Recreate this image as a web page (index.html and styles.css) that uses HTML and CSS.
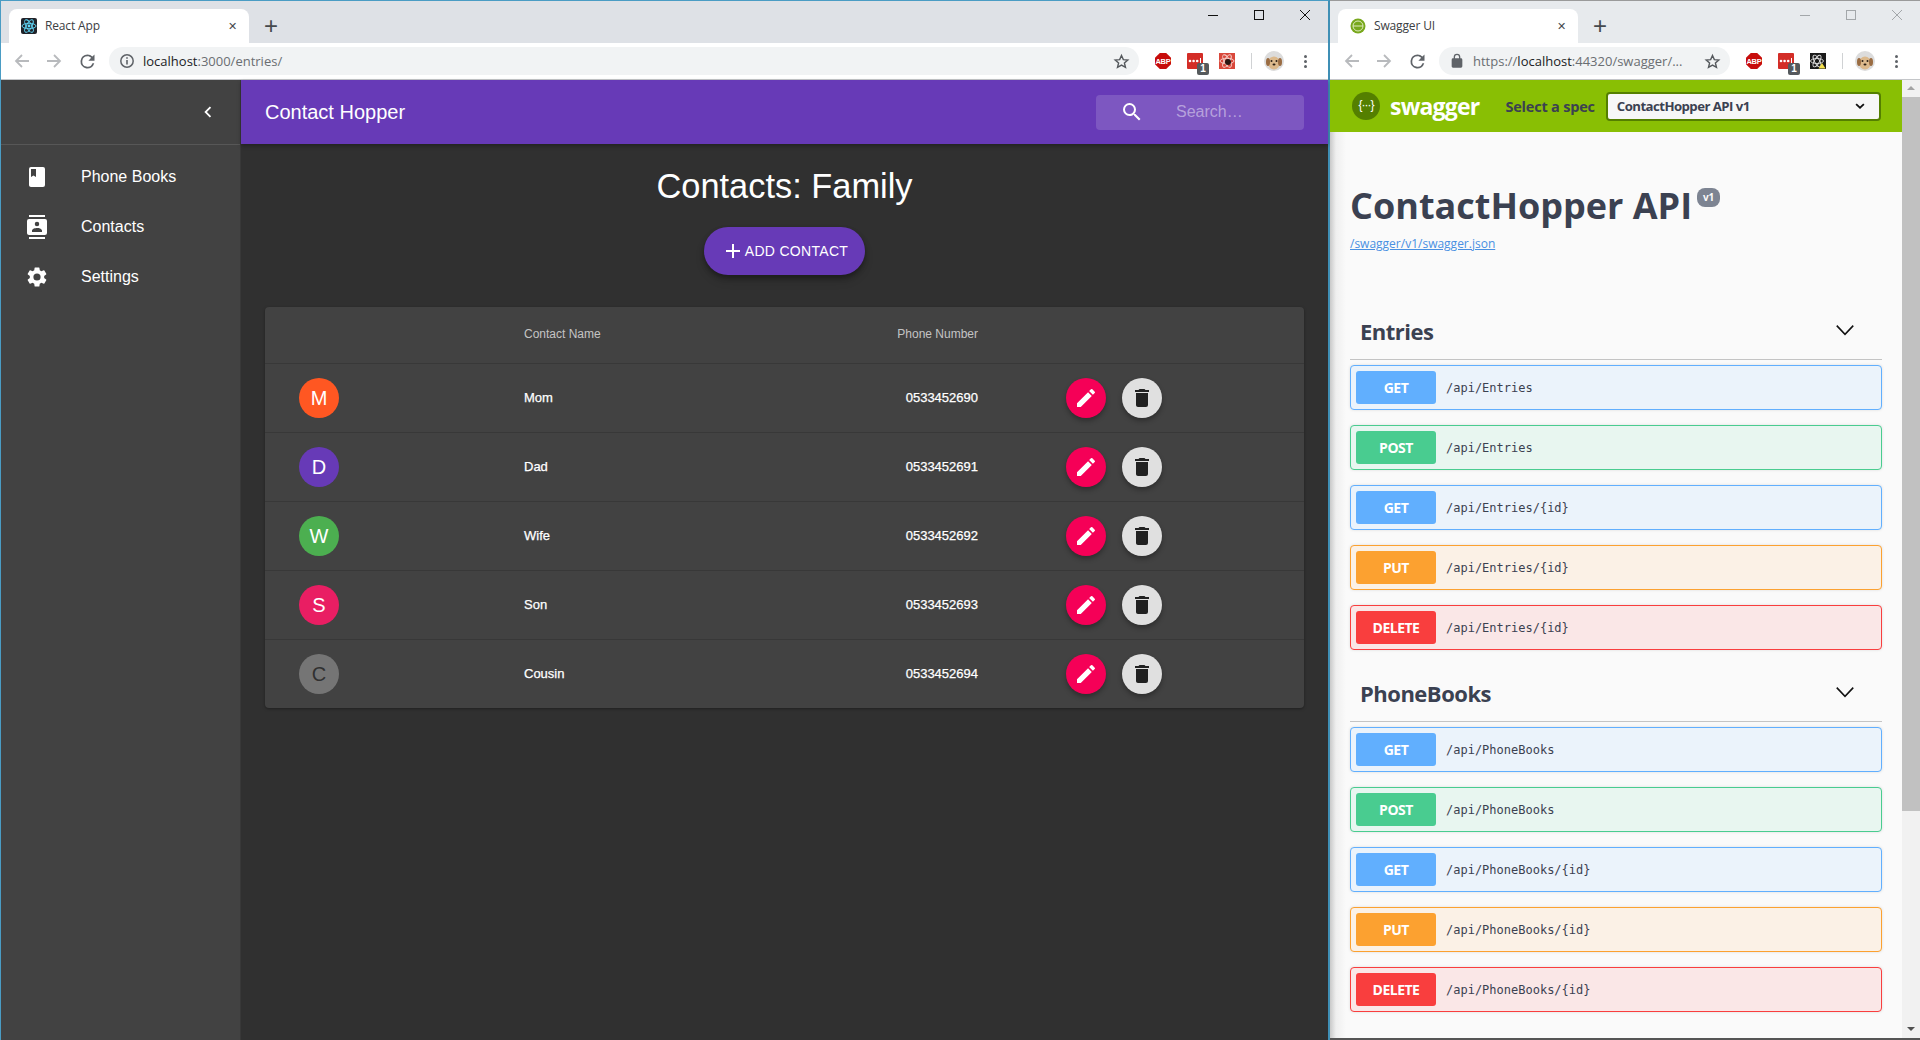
FILE: index.html
```html
<!DOCTYPE html>
<html lang="en">
<head>
  <meta charset="UTF-8" />
  <title>Contact Hopper</title>
  <link rel="stylesheet" href="styles.css">
</head>
<body>
  <svg class="defs" width="0" height="0">
    <defs>
      <symbol id="i-back" viewBox="0 0 16 16"><path d="M15 8H2.5M8 2L2 8l6 6" fill="none" stroke="currentColor" stroke-width="1.8"/></symbol>
      <symbol id="i-forward" viewBox="0 0 16 16"><path d="M1 8h12.5M8 2l6 6-6 6" fill="none" stroke="currentColor" stroke-width="1.8"/></symbol>
      <symbol id="i-reload" viewBox="0 0 24 24"><path d="M17.65 6.35A7.96 7.96 0 0 0 12 4a8 8 0 1 0 7.73 10h-2.08A6 6 0 1 1 12 6c1.66 0 3.14.69 4.22 1.78L13 11h7V4l-2.35 2.35z" fill="currentColor"/></symbol>
      <symbol id="i-star" viewBox="0 0 24 24"><path d="M12 3.5l2.6 5.8 6.3.6-4.8 4.2 1.5 6.2L12 17l-5.6 3.3 1.5-6.2-4.8-4.2 6.3-.6z" fill="none" stroke="currentColor" stroke-width="2"/></symbol>
      <symbol id="i-abp" viewBox="0 0 20 20"><path d="M6 0h8l6 6v8l-6 6H6l-6-6V6z" fill="#c70d0c"/></symbol>
      <symbol id="i-lastpass" viewBox="0 0 16 16"><rect width="16" height="16" rx="1" fill="#d32d27"/><circle cx="3" cy="8" r="1.3" fill="#fff"/><circle cx="6.6" cy="8" r="1.3" fill="#fff"/><circle cx="10.2" cy="8" r="1.3" fill="#fff"/><rect x="13" y="5" width="1" height="6" fill="#fff"/></symbol>
      <symbol id="i-avatar" viewBox="0 0 20 20">
        <circle cx="10" cy="10" r="10" fill="#dcdcdc"/>
        <ellipse cx="10" cy="12" rx="6" ry="6.5" fill="#dcb98c"/>
        <ellipse cx="4" cy="11" rx="2" ry="4" fill="#9a6c42"/>
        <ellipse cx="16" cy="11" rx="2" ry="4" fill="#9a6c42"/>
        <circle cx="7.5" cy="10" r="1" fill="#2b2016"/>
        <circle cx="12.5" cy="10" r="1" fill="#2b2016"/>
        <ellipse cx="10" cy="13.5" rx="1.5" ry="1" fill="#2b2016"/>
      </symbol>
      <symbol id="i-edit" viewBox="0 0 24 24"><path d="M3 17.25V21h3.75L17.81 9.94l-3.75-3.75L3 17.25zM20.71 7.04a1 1 0 0 0 0-1.41l-2.34-2.34a1 1 0 0 0-1.41 0l-1.83 1.83 3.75 3.75 1.83-1.83z" fill="currentColor"/></symbol>
      <symbol id="i-trash" viewBox="0 0 24 24"><path d="M6 19c0 1.1.9 2 2 2h8a2 2 0 0 0 2-2V7H6v12zM19 4h-3.5l-1-1h-5l-1 1H5v2h14V4z" fill="currentColor"/></symbol>
      <symbol id="i-down" viewBox="0 0 20 20"><path d="M2.5 6l7.5 8 7.5-8" fill="none" stroke="currentColor" stroke-width="1.4"/></symbol>
    </defs>
  </svg>

  <div class="desktop">
    <section class="window window-left">
      <div class="tabstrip">
        <div class="tab">
          <svg class="favicon" viewBox="0 0 16 16">
            <rect width="16" height="16" rx="2" fill="#20232a"/>
            <g fill="none" stroke="#61dafb" stroke-width=".9">
              <ellipse cx="8" cy="8" rx="7" ry="2.7"/>
              <ellipse cx="8" cy="8" rx="7" ry="2.7" transform="rotate(60 8 8)"/>
              <ellipse cx="8" cy="8" rx="7" ry="2.7" transform="rotate(120 8 8)"/>
            </g>
            <circle cx="8" cy="8" r="1.4" fill="#61dafb"/>
          </svg>
          <span class="tab-title">React App</span>
          <span class="tab-close">✕</span>
        </div>
        <span class="new-tab">+</span>
        <div class="win-controls">
          <span class="win-min"></span>
          <span class="win-max"></span>
          <svg class="win-close" viewBox="0 0 10 10"><path d="M0 0l10 10M10 0L0 10" stroke="currentColor" stroke-width="1"/></svg>
        </div>
      </div>
      <div class="toolbar">
        <svg class="nav-icon nav-off"><use href="#i-back"/></svg>
        <svg class="nav-icon nav-off"><use href="#i-forward"/></svg>
        <svg class="nav-icon nav-on"><use href="#i-reload"/></svg>
        <div class="omnibox">
          <svg class="omni-info" viewBox="0 0 16 16"><circle cx="8" cy="8" r="6.2" fill="none" stroke="#5f6368" stroke-width="1.5"/><path d="M8 7v4.5M8 4.3v1.5" stroke="#5f6368" stroke-width="1.6"/></svg>
          <span class="url"><b>localhost</b>:3000/entries/</span>
          <svg class="omni-star"><use href="#i-star"/></svg>
        </div>
        <div class="extensions">
          <span class="ext-abp"><svg><use href="#i-abp"/></svg><i>ABP</i></span>
          <span class="ext-lastpass"><svg><use href="#i-lastpass"/></svg><em>1</em></span>
          <span class="ext-react ext-react-red">
            <svg viewBox="0 0 16 16"><g fill="none" stroke="#f6d5d0" stroke-width=".9"><ellipse cx="8" cy="8" rx="7" ry="2.7"/><ellipse cx="8" cy="8" rx="7" ry="2.7" transform="rotate(60 8 8)"/><ellipse cx="8" cy="8" rx="7" ry="2.7" transform="rotate(120 8 8)"/></g><circle cx="9" cy="9" r="3" fill="#2a1512"/></svg>
          </span>
          <span class="ext-divider"></span>
          <svg class="ext-avatar"><use href="#i-avatar"/></svg>
          <span class="ext-menu"><i></i><i></i><i></i></span>
        </div>
      </div>

      <div class="app">
        <aside class="drawer">
          <div class="drawer-head">
            <svg class="drawer-chevron" viewBox="0 0 24 24"><path d="M15.41 7.41L14 6l-6 6 6 6 1.41-1.41L10.83 12z" fill="currentColor"/></svg>
          </div>
          <nav class="drawer-nav">
            <a class="drawer-item">
              <svg viewBox="0 0 24 24"><path d="M18 2H6a2 2 0 0 0-2 2v16c0 1.1.9 2 2 2h12a2 2 0 0 0 2-2V4a2 2 0 0 0-2-2zM6 4h5v8l-2.5-1.5L6 12V4z" fill="currentColor"/></svg>
              <span>Phone Books</span>
            </a>
            <a class="drawer-item">
              <svg viewBox="0 0 24 24"><path d="M20 0H4v2h16V0zM4 24h16v-2H4v2zM20 4H4a2 2 0 0 0-2 2v12c0 1.1.9 2 2 2h16a2 2 0 0 0 2-2V6a2 2 0 0 0-2-2zm-8 2.75A2.25 2.25 0 1 1 12 11.25a2.25 2.25 0 0 1 0-4.5zM17 17H7v-1.5c0-1.67 3.33-2.5 5-2.5s5 .83 5 2.5V17z" fill="currentColor"/></svg>
              <span>Contacts</span>
            </a>
            <a class="drawer-item">
              <svg viewBox="0 0 24 24"><path d="M19.14 12.94c.04-.3.06-.61.06-.94s-.02-.64-.07-.94l2.03-1.58a.5.5 0 0 0 .12-.61l-1.92-3.32a.5.5 0 0 0-.59-.22l-2.39.96a7 7 0 0 0-1.62-.94l-.36-2.54a.48.48 0 0 0-.48-.41h-3.84a.48.48 0 0 0-.47.41l-.36 2.54c-.59.24-1.13.57-1.62.94l-2.39-.96a.49.49 0 0 0-.59.22L2.74 8.87a.48.48 0 0 0 .12.61l2.03 1.58c-.05.3-.09.63-.09.94s.02.64.07.94l-2.03 1.58a.5.5 0 0 0-.12.61l1.92 3.32c.12.22.37.29.59.22l2.39-.96c.5.38 1.03.7 1.62.94l.36 2.54c.05.24.24.41.48.41h3.84c.24 0 .44-.17.47-.41l.36-2.54c.59-.24 1.13-.56 1.62-.94l2.39.96c.22.08.47 0 .59-.22l1.92-3.32a.48.48 0 0 0-.12-.61l-2.01-1.58zM12 15.6a3.6 3.6 0 1 1 0-7.2 3.6 3.6 0 0 1 0 7.2z" fill="currentColor"/></svg>
              <span>Settings</span>
            </a>
          </nav>
        </aside>

        <div class="main">
          <header class="appbar">
            <h6 class="appbar-title">Contact Hopper</h6>
            <div class="search">
              <svg viewBox="0 0 24 24"><path d="M15.5 14h-.79l-.28-.27A6.47 6.47 0 0 0 16 9.5 6.5 6.5 0 1 0 9.5 16c1.61 0 3.09-.59 4.23-1.57l.27.28v.79l5 4.99L20.49 19l-4.99-5zm-6 0a4.5 4.5 0 1 1 0-9 4.5 4.5 0 0 1 0 9z" fill="currentColor"/></svg>
              <span>Search…</span>
            </div>
          </header>

          <div class="content">
            <h1 class="page-title">Contacts: Family</h1>
            <button class="add-btn">
              <svg viewBox="0 0 24 24"><path d="M19 13h-6v6h-2v-6H5v-2h6V5h2v6h6v2z" fill="currentColor"/></svg>
              Add Contact
            </button>

            <table class="contacts">
              <thead>
                <tr>
                  <th class="col-avatar"></th>
                  <th class="col-name">Contact Name</th>
                  <th class="col-phone">Phone Number</th>
                  <th class="col-actions"></th>
                </tr>
              </thead>
              <tbody id="contactRows"></tbody>
            </table>
          </div>
        </div>
      </div>
    </section>

    <section class="window window-right">
      <div class="tabstrip">
        <div class="tab">
          <svg class="favicon" viewBox="0 0 16 16">
            <circle cx="8" cy="8" r="7.5" fill="#78a81d"/>
            <circle cx="8" cy="8" r="5" fill="none" stroke="#dfeac0" stroke-width="1"/>
            <path d="M3 8h10" stroke="#dfeac0" stroke-width="1"/>
          </svg>
          <span class="tab-title">Swagger UI</span>
          <span class="tab-close">✕</span>
        </div>
        <span class="new-tab">+</span>
        <div class="win-controls">
          <span class="win-min"></span>
          <span class="win-max"></span>
          <svg class="win-close" viewBox="0 0 10 10"><path d="M0 0l10 10M10 0L0 10" stroke="currentColor" stroke-width="1"/></svg>
        </div>
      </div>
      <div class="toolbar">
        <svg class="nav-icon nav-off"><use href="#i-back"/></svg>
        <svg class="nav-icon nav-off"><use href="#i-forward"/></svg>
        <svg class="nav-icon nav-on"><use href="#i-reload"/></svg>
        <div class="omnibox">
          <svg class="omni-info" viewBox="0 0 24 24"><path d="M18 8h-1V6a5 5 0 0 0-10 0v2H6a2 2 0 0 0-2 2v10c0 1.1.9 2 2 2h12a2 2 0 0 0 2-2V10a2 2 0 0 0-2-2zM9 6a3 3 0 0 1 6 0v2H9V6z" fill="#5f6368"/></svg>
          <span class="url">https://<b>localhost</b>:44320/swagger/...</span>
          <svg class="omni-star"><use href="#i-star"/></svg>
        </div>
        <div class="extensions">
          <span class="ext-abp"><svg><use href="#i-abp"/></svg><i>ABP</i></span>
          <span class="ext-lastpass"><svg><use href="#i-lastpass"/></svg><em>1</em></span>
          <span class="ext-react ext-react-dark">
            <svg viewBox="0 0 16 16"><g fill="none" stroke="#e0e0e0" stroke-width=".9"><ellipse cx="7" cy="8" rx="6.5" ry="2.5"/><ellipse cx="7" cy="8" rx="6.5" ry="2.5" transform="rotate(60 7 8)"/><ellipse cx="7" cy="8" rx="6.5" ry="2.5" transform="rotate(120 7 8)"/></g><path d="M12 10l3.5 5.5h-7z" fill="#f4e04d"/></svg>
          </span>
          <span class="ext-divider"></span>
          <svg class="ext-avatar"><use href="#i-avatar"/></svg>
          <span class="ext-menu"><i></i><i></i><i></i></span>
        </div>
      </div>

      <div class="swagger">
        <div class="swagger-page">
          <div class="topbar">
            <span class="logo-mark">{···}</span>
            <span class="logo-word">swagger</span>
            <span class="spec-label">Select a spec</span>
            <div class="spec-select">
              <span>ContactHopper API v1</span>
              <svg viewBox="0 0 20 20"><path d="M13.25 8.5L10 11.6 6.75 8.5 5.5 9.7l4.5 4.3 4.5-4.3z" fill="#111" transform="translate(0 -1)"/></svg>
            </div>
          </div>
          <div class="info">
            <h2 class="api-title">ContactHopper API<span class="version">v1</span></h2>
            <a class="spec-link">/swagger/v1/swagger.json</a>
          </div>
          <div id="opGroups"></div>
        </div>
        <div class="scrollbar">
          <span class="scroll-up"></span>
          <span class="scroll-thumb"></span>
          <span class="scroll-down"></span>
        </div>
      </div>
    </section>
  </div>

  <script>
    const contacts = [
      { name: "Mom", phone: "0533452690", color: "#ff5722", text: "#fff" },
      { name: "Dad", phone: "0533452691", color: "#673ab7", text: "#fff" },
      { name: "Wife", phone: "0533452692", color: "#4caf50", text: "#fff" },
      { name: "Son", phone: "0533452693", color: "#e91e63", text: "#fff" },
      { name: "Cousin", phone: "0533452694", color: "#757575", text: "#303030" }
    ];

    document.getElementById("contactRows").innerHTML = contacts.map((c) => `
      <tr>
        <td class="col-avatar"><span class="avatar" style="background-color: ${c.color}; color: ${c.text}">${c.name[0]}</span></td>
        <td class="col-name">${c.name}</td>
        <td class="col-phone">${c.phone}</td>
        <td class="col-actions">
          <div class="actions">
            <button class="fab fab-edit"><svg><use href="#i-edit"/></svg></button>
            <button class="fab fab-delete"><svg><use href="#i-trash"/></svg></button>
          </div>
        </td>
      </tr>`).join("");

    const groups = [
      { name: "Entries", path: "/api/Entries" },
      { name: "PhoneBooks", path: "/api/PhoneBooks" }
    ];

    document.getElementById("opGroups").innerHTML = groups.map((g) => `
      <div class="op-group">
        <div class="op-head"><h3>${g.name}</h3><svg><use href="#i-down"/></svg></div>
        ${[["get", ""], ["post", ""], ["get", "/{id}"], ["put", "/{id}"], ["delete", "/{id}"]].map(([m, suffix]) => `
          <div class="op op-${m}"><span class="op-method">${m.toUpperCase()}</span><span class="op-path">${g.path}${suffix}</span></div>`).join("")}
      </div>`).join("");
  </script>
</body>
</html>
```

FILE: styles.css
```css
* {
  box-sizing: border-box;
}

body {
  margin: 0;
  height: 1040px;
  overflow: hidden;
  font-family: "Liberation Sans", Arial, sans-serif;
}

.defs {
  position: absolute;
}

.desktop {
  display: flex;
  height: 1040px;
}

/* Chrome windows */
.window {
  display: flex;
  flex-direction: column;
  height: 1040px;
}
.window-left {
  width: 1330px;
  border: 1px solid #4a9cc4;
  border-bottom: none;
  border-right-width: 2px;
  border-right-color: #3f8fb5;
}
.window-right {
  width: 590px;
  border-top: 1px solid #9a9a9a;
  border-bottom: 2px solid #555;
}

.tabstrip {
  display: flex;
  align-items: flex-end;
  height: 42px;
  background-color: #dee1e6;
  position: relative;
}
.window-right .tabstrip {
  background-color: #e7eaed;
}

.tab {
  display: flex;
  align-items: center;
  width: 240px;
  height: 34px;
  margin-left: 8px;
  padding: 0 12px 0 12px;
  background-color: #fff;
  border-radius: 8px 8px 0 0;
}
.favicon {
  width: 16px;
  height: 16px;
  flex: none;
}
.tab-title {
  flex: 1;
  margin-left: 8px;
  margin-top: -1px;
  font-family: "Open Sans", sans-serif;
  font-size: 12px;
  letter-spacing: -0.15px;
  color: #3c4043;
}
.tab-close {
  font-size: 11px;
  color: #45494d;
}
.new-tab {
  width: 28px;
  height: 34px;
  margin-left: 8px;
  text-align: center;
  font-family: "Liberation Sans", sans-serif;
  font-size: 24px;
  line-height: 33px;
  color: #45494d;
}

.win-controls {
  display: flex;
  align-items: center;
  gap: 36px;
  position: absolute;
  top: 9px;
  right: 18px;
  color: #111;
}
.win-min {
  width: 10px;
  height: 1px;
  background-color: currentColor;
}
.win-max {
  width: 10px;
  height: 10px;
  border: 1px solid currentColor;
}
.win-close {
  width: 10px;
  height: 10px;
}
.window-right .win-controls {
  color: #a3a7aa;
}

.toolbar {
  display: flex;
  align-items: center;
  height: 37px;
  padding-left: 13px;
  background-color: #fff;
  border-bottom: 1px solid #c4c6c9;
}
.window-right .toolbar {
  padding-left: 14px;
}
.nav-icon {
  flex: none;
  width: 16px;
  height: 16px;
  margin-right: 16px;
}
.nav-off {
  color: #b8babd;
}
.nav-icon.nav-on {
  width: 21px;
  height: 21px;
  color: #5f6368;
  margin-right: 11px;
  margin-left: -1px;
}
.omnibox {
  display: flex;
  align-items: center;
  flex: 1;
  height: 28px;
  padding: 0 9px 0 10px;
  background-color: #f1f3f4;
  border-radius: 14px;
}
.omni-info {
  flex: none;
  width: 16px;
  height: 16px;
}
.url {
  flex: 1;
  margin-left: 8px;
  font-family: "Open Sans", sans-serif;
  font-size: 13px;
  color: #6a6e72;
  white-space: nowrap;
  overflow: hidden;
}
.url b {
  font-weight: 400;
  color: #202124;
}
.omni-star {
  flex: none;
  width: 17px;
  height: 17px;
  color: #55595d;
}

.extensions {
  display: flex;
  align-items: center;
  flex: none;
}
.extensions > * {
  flex: none;
}
.ext-abp {
  position: relative;
  width: 16px;
  height: 16px;
  margin-left: 16px;
}
.ext-abp svg {
  width: 16px;
  height: 16px;
}
.ext-abp i {
  position: absolute;
  left: 0;
  top: 4px;
  width: 16px;
  text-align: center;
  font: normal bold 7.5px "Liberation Sans", sans-serif;
  letter-spacing: -0.2px;
  color: #fff;
}
.ext-lastpass {
  position: relative;
  width: 16px;
  height: 16px;
  margin-left: 16px;
}
.ext-lastpass svg {
  display: block;
  width: 16px;
  height: 16px;
}
.ext-lastpass em {
  position: absolute;
  left: 10px;
  top: 10px;
  width: 12px;
  height: 12px;
  border-radius: 2px;
  background-color: #55595c;
  text-align: center;
  font: normal bold 10px/12px "Liberation Sans", sans-serif;
  color: #fff;
}
.ext-react {
  width: 16px;
  height: 16px;
  margin-left: 16px;
}
.ext-react svg {
  display: block;
  width: 16px;
  height: 16px;
}
.ext-react-red {
  background-color: #d9483b;
}
.ext-react-dark {
  background-color: #1b1b1b;
}
.ext-divider {
  width: 1px;
  height: 16px;
  margin-left: 16px;
  background-color: #d0d2d4;
}
.ext-avatar {
  width: 20px;
  height: 20px;
  margin-left: 12px;
}
.ext-menu {
  display: flex;
  flex-direction: column;
  gap: 2px;
  width: 4px;
  margin: 0 21px 0 20px;
}
.ext-menu i {
  width: 3px;
  height: 3px;
  border-radius: 50%;
  background-color: #5f6368;
}
.window-left .ext-menu {
  margin-right: 20px;
}

/* Contact Hopper app */
.app {
  display: flex;
  flex: 1;
  min-height: 0;
}

.drawer {
  width: 240px;
  flex: none;
  background-color: #424242;
  border-right: 1px solid #383838;
  color: #fff;
}
.drawer-head {
  display: flex;
  align-items: center;
  justify-content: flex-end;
  height: 65px;
  padding-right: 21px;
  border-bottom: 1px solid #575757;
}
.drawer-chevron {
  width: 22px;
  height: 22px;
}
.drawer-nav {
  padding-top: 7px;
}
.drawer-item {
  display: flex;
  align-items: center;
  height: 50px;
  padding-left: 24px;
  font-size: 16px;
}
.drawer-item svg {
  flex: none;
  width: 24px;
  height: 24px;
  margin-right: 32px;
}

.main {
  flex: 1;
  display: flex;
  flex-direction: column;
  min-width: 0;
  background-color: #303030;
}
.appbar {
  display: flex;
  align-items: center;
  justify-content: space-between;
  flex: none;
  height: 64px;
  padding: 0 24px;
  background-color: #673ab7;
  color: #fff;
  box-shadow: 0 2px 4px rgba(0, 0, 0, 0.3);
}
.appbar-title {
  margin: 0;
  font-size: 20px;
  font-weight: 400;
}
.search {
  display: flex;
  align-items: center;
  width: 208px;
  height: 35px;
  padding-left: 24px;
  border-radius: 4px;
  background-color: rgba(255, 255, 255, 0.15);
  font-size: 16px;
}
.search svg {
  flex: none;
  width: 24px;
  height: 24px;
}
.search span {
  margin-left: 32px;
  color: rgba(255, 255, 255, 0.45);
}

.content {
  display: flex;
  flex-direction: column;
  align-items: center;
  padding: 22px 24px 0;
}
.page-title {
  margin: 0;
  height: 39px;
  font-size: 34.4px;
  font-weight: 400;
  line-height: 40px;
  color: #fff;
}
.add-btn {
  display: flex;
  align-items: center;
  justify-content: center;
  width: 161px;
  height: 48px;
  margin-top: 22px;
  padding: 0;
  border: none;
  border-radius: 24px;
  background-color: #673ab7;
  color: #fff;
  font-family: "Liberation Sans", sans-serif;
  font-size: 14px;
  letter-spacing: 0.3px;
  text-transform: uppercase;
  box-shadow: 0 3px 5px rgba(0, 0, 0, 0.3), 0 6px 10px rgba(0, 0, 0, 0.14);
}
.add-btn svg {
  flex: none;
  width: 24px;
  height: 24px;
}

.contacts {
  width: 1039px;
  margin-top: 32px;
  border-collapse: separate;
  border-spacing: 0;
  table-layout: fixed;
  background-color: #424242;
  border-radius: 4px;
  box-shadow: 0 1px 3px rgba(0, 0, 0, 0.35);
}
.contacts th {
  height: 57px;
  padding: 0;
  font-size: 12px;
  font-weight: 400;
  color: rgba(255, 255, 255, 0.7);
  border-bottom: 1px solid #383838;
}
.contacts td {
  height: 69px;
  padding: 0;
  font-size: 13px;
  font-weight: 400;
  -webkit-text-stroke: 0.25px #fff;
  color: #fff;
  border-bottom: 1px solid #383838;
}
.contacts tr:last-child td {
  height: 68px;
  border-bottom: none;
}
.col-avatar {
  width: 259px;
}
.contacts .col-name {
  width: 300px;
  padding-bottom: 2px;
  text-align: left;
}
.contacts .col-phone {
  width: 154px;
  padding-bottom: 2px;
  text-align: right;
}
.contacts .col-actions {
  padding-left: 88px;
}
.avatar {
  display: block;
  width: 40px;
  height: 40px;
  margin-left: 34px;
  border-radius: 50%;
  text-align: center;
  font-size: 20px;
  font-weight: 400;
  line-height: 40px;
  -webkit-text-stroke: 0;
}
.actions {
  display: flex;
  gap: 16px;
}
.fab {
  display: flex;
  align-items: center;
  justify-content: center;
  width: 40px;
  height: 40px;
  padding: 0;
  border: none;
  border-radius: 50%;
  box-shadow: 0 3px 5px rgba(0, 0, 0, 0.3);
}
.fab svg {
  width: 24px;
  height: 24px;
}
.fab-edit {
  background-color: #f50057;
  color: #fff;
}
.fab-delete {
  background-color: #e0e0e0;
  color: #212121;
}

/* Swagger page */
.swagger {
  display: flex;
  flex: 1;
  min-height: 0;
}
.swagger-page {
  flex: 1;
  min-width: 0;
  overflow: hidden;
  background: linear-gradient(to right, #c9c9c9, #efefef 6px, #fafafa 16px);
}
.topbar {
  display: flex;
  align-items: center;
  height: 52px;
  padding-left: 22px;
  background-color: #89bf04;
}
.logo-mark {
  flex: none;
  width: 28px;
  height: 28px;
  border-radius: 50%;
  background-color: #547f00;
  font-size: 12px;
  letter-spacing: -1px;
  line-height: 27px;
  text-align: center;
  color: #fff;
}
.logo-word {
  margin-left: 10px;
  font-family: "Open Sans", sans-serif;
  font-size: 23px;
  font-weight: 700;
  letter-spacing: -0.8px;
  color: #fff;
}
.spec-label {
  margin-left: 26px;
  font-family: "Open Sans", sans-serif;
  font-size: 14.5px;
  font-weight: 700;
  letter-spacing: -0.2px;
  white-space: nowrap;
  color: #3b4151;
}
.spec-select {
  display: flex;
  align-items: center;
  justify-content: space-between;
  flex: none;
  width: 275px;
  height: 29px;
  margin-left: 11px;
  padding: 0 9px 0 9px;
  border: 2px solid #547f00;
  border-radius: 4px;
  background-color: #f7f7f7;
  font-family: "Open Sans", sans-serif;
  font-size: 13.2px;
  font-weight: 700;
  letter-spacing: -0.55px;
  color: #3b4151;
}
.spec-select svg {
  flex: none;
  width: 20px;
  height: 20px;
}

.info {
  height: 188px;
  padding: 48px 0 0 20px;
}
.api-title {
  position: relative;
  margin: 0;
  height: 52px;
  font-family: "Open Sans", sans-serif;
  font-size: 36px;
  font-weight: 700;
  line-height: 52px;
  color: #3b4151;
}
.version {
  display: inline-block;
  position: relative;
  top: -18px;
  margin-left: 5px;
  padding: 0;
  width: 23px;
  height: 19px;
  border-radius: 8px;
  background-color: #7d8492;
  font-size: 10px;
  line-height: 19px;
  text-align: center;
  color: #fafafa;
}
.spec-link {
  display: block;
  margin-top: 3px;
  font-family: "Open Sans", sans-serif;
  font-size: 12px;
  color: #4990e2;
  text-decoration: underline;
}

.op-group {
  margin-bottom: 32px;
  padding: 0 20px;
}
.op-head {
  display: flex;
  align-items: center;
  justify-content: space-between;
  height: 40px;
  margin-bottom: 5px;
  padding: 0 26px 18px 10px;
  border-bottom: 1px solid #c4c4c4;
  color: #3b4151;
}
.op-head h3 {
  margin: 0;
  font-family: "Open Sans", sans-serif;
  font-size: 22px;
  font-weight: 700;
  letter-spacing: -0.5px;
}
.op-head svg {
  width: 22px;
  height: 22px;
  margin-bottom: 2px;
  color: #111;
}
.op {
  display: flex;
  align-items: center;
  height: 45px;
  margin-bottom: 15px;
  padding: 0 5px;
  border: 1px solid;
  border-radius: 4px;
  box-shadow: 0 0 3px rgba(0, 0, 0, 0.12);
}
.op:last-child {
  margin-bottom: 0;
}
.op-method {
  flex: none;
  width: 80px;
  height: 33px;
  border-radius: 3px;
  font-family: "Open Sans", sans-serif;
  font-size: 14px;
  font-weight: 700;
  letter-spacing: -0.5px;
  line-height: 33px;
  text-align: center;
  color: #fff;
}
.op-path {
  margin-left: 10px;
  font-family: "DejaVu Sans Mono", monospace;
  font-size: 12px;
  color: #3b4151;
}
.op-get {
  border-color: #61affe;
  background-color: #ebf3fb;
}
.op-get .op-method {
  background-color: #61affe;
}
.op-post {
  border-color: #49cc90;
  background-color: #e8f6f0;
}
.op-post .op-method {
  background-color: #49cc90;
}
.op-put {
  border-color: #fca130;
  background-color: #fbf1e6;
}
.op-put .op-method {
  background-color: #fca130;
}
.op-delete {
  border-color: #f93e3e;
  background-color: #fae7e7;
}
.op-delete .op-method {
  background-color: #f93e3e;
}

.scrollbar {
  display: flex;
  flex-direction: column;
  flex: none;
  width: 18px;
  background-color: #f1f1f1;
}
.scroll-up,
.scroll-down {
  flex: none;
  height: 17px;
  position: relative;
}
.scroll-up::after,
.scroll-down::after {
  content: "";
  position: absolute;
  left: 5px;
  top: 6px;
  border-left: 4px solid transparent;
  border-right: 4px solid transparent;
}
.scroll-up::after {
  border-bottom: 4px solid #a3a3a3;
}
.scroll-down::after {
  border-top: 4px solid #505050;
}
.scroll-thumb {
  height: 714px;
  background-color: #c1c1c1;
}
.scroll-down {
  margin-top: auto;
}
```
